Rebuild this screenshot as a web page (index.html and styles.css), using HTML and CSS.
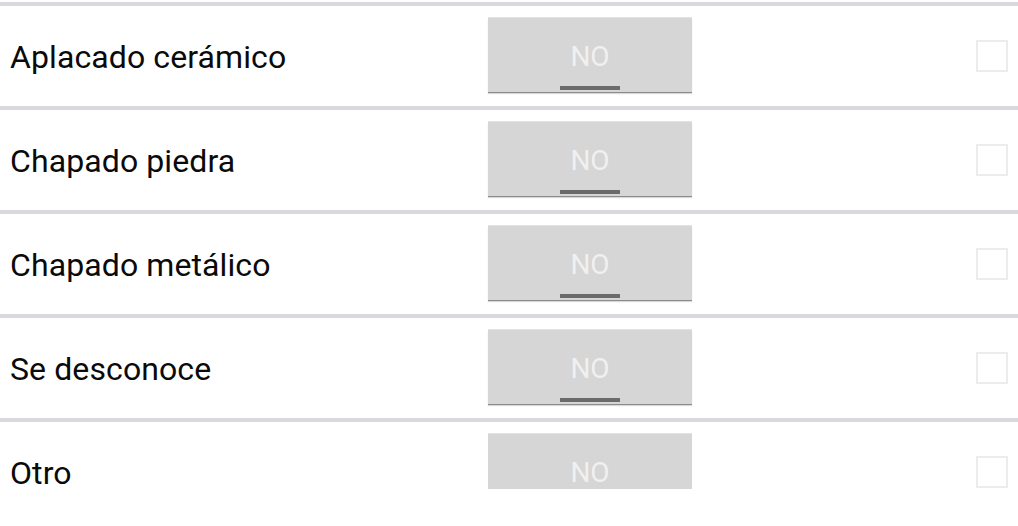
FILE: index.html
```html
<!DOCTYPE html>
<html>
<head>
<meta charset="utf-8">
<link rel="stylesheet" href="styles.css">
</head>
<body>
<div class="list">
  <div class="row">
    <div class="label">Aplacado cerámico</div>
    <div class="btn"><span class="btn-text">NO</span><span class="bar"></span></div>
    <div class="check"></div>
  </div>
  <div class="row">
    <div class="label">Chapado piedra</div>
    <div class="btn"><span class="btn-text">NO</span><span class="bar"></span></div>
    <div class="check"></div>
  </div>
  <div class="row">
    <div class="label">Chapado metálico</div>
    <div class="btn"><span class="btn-text">NO</span><span class="bar"></span></div>
    <div class="check"></div>
  </div>
  <div class="row">
    <div class="label">Se desconoce</div>
    <div class="btn"><span class="btn-text">NO</span><span class="bar"></span></div>
    <div class="check"></div>
  </div>
  <div class="row row-last">
    <div class="label">Otro</div>
    <div class="btn btn-cut"><span class="btn-text">NO</span></div>
    <div class="check"></div>
  </div>
</div>
</body>
</html>
```

FILE: styles.css
```css
html, body {
  margin: 0;
  padding: 0;
  background: #ffffff;
  width: 1018px;
  height: 526px;
  overflow: hidden;
  font-family: Roboto, "Liberation Sans", sans-serif;
}

.list {
  padding-top: 2px;
  display: flex;
  flex-direction: column;
}

.row {
  border-top: 4px solid #d9d9dd;
  height: 100px;
  display: flex;
  align-items: flex-start;
  box-sizing: content-box;
}

.label {
  width: 478px;
  padding-left: 10px;
  padding-top: 2px;
  height: 98px;
  display: flex;
  align-items: center;
  font-size: 32px;
  letter-spacing: 0.1px;
  color: #0a0a0a;
}

.btn {
  margin-top: 12px;
  width: 204px;
  height: 74px;
  background: #d6d6d6;
  box-shadow: 0 1px 0 #8c8c8c, 0 2px 1px rgba(0, 0, 0, 0.15), 0 -1px 0 #e2e2e2;
  display: flex;
  flex-direction: column;
  align-items: center;
  position: relative;
}

.btn-text {
  margin-top: 23px;
  font-size: 28px;
  font-weight: 400;
  color: #f0f0f0;
  line-height: 32px;
}

.bar {
  margin-top: 13px;
  width: 60px;
  height: 4px;
  background: #6b6b6b;
}

.btn-cut {
  height: 55px;
  box-shadow: 0 -1px 0 #e2e2e2;
  overflow: hidden;
}

.check {
  margin-left: auto;
  margin-right: 10px;
  margin-top: 34px;
  width: 28px;
  height: 28px;
  border: 2px solid #ececec;
}
```
